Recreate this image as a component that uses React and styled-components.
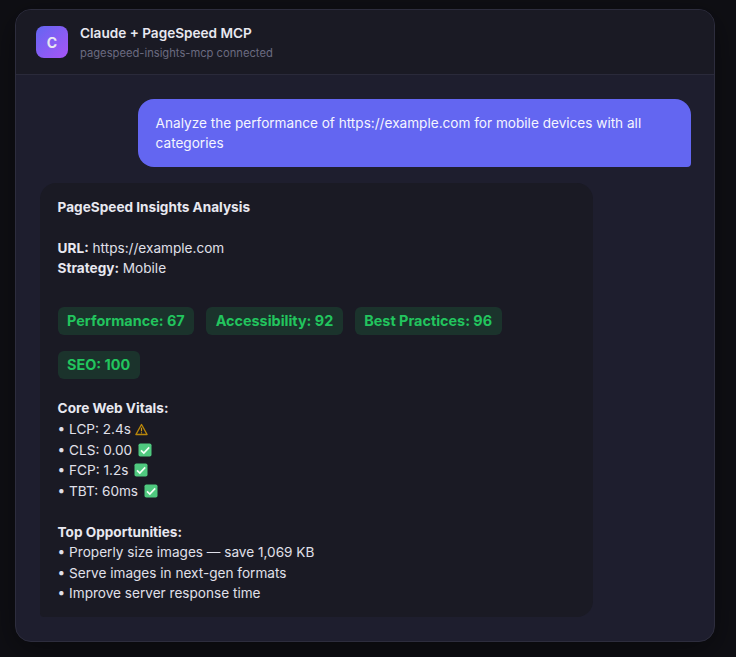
import React from 'react'
import styled, { createGlobalStyle } from 'styled-components'

const GlobalStyle = createGlobalStyle`
   html, body {
      margin: 0;
      background: #0f0f14;
   }
   * {
      box-sizing: border-box;
   }
`

const scores = [
   'Performance: 67',
   'Accessibility: 92',
   'Best Practices: 96',
   'SEO: 100',
]

const vitals = [
   { label: 'LCP: 2.4s', warn: true },
   { label: 'CLS: 0.00' },
   { label: 'FCP: 1.2s' },
   { label: 'TBT: 60ms' },
]

const opportunities = [
   'Properly size images — save 1,069 KB',
   'Serve images in next-gen formats',
   'Improve server response time',
]

function WarnIcon() {
   return (
      <StatusSvg viewBox="0 0 14 14" $size={13} $gap={0}>
         <path
            d="M7 1.6 13 12.4H1L7 1.6Z"
            fill="none"
            stroke="#b8860b"
            strokeWidth="1.5"
            strokeLinejoin="round"
         />
         <path d="M7 5v4" stroke="#d39a10" strokeWidth="1.3" />
         <path d="M7 10v1.2" stroke="#d39a10" strokeWidth="1.2" />
      </StatusSvg>
   )
}

function CheckIcon() {
   return (
      <StatusSvg viewBox="0 0 14 14" $size={14} $gap={2}>
         <rect x="0.5" y="0.5" width="13" height="13" rx="1.8" fill="#4fc97f" />
         <path
            d="M3 7.4 5.8 10 11.2 4.4"
            fill="none"
            stroke="#f2fff6"
            strokeWidth="1.7"
         />
      </StatusSvg>
   )
}

function App() {
   return (
      <Page>
         <GlobalStyle />
         <Card>
            <Header>
               <Avatar>C</Avatar>
               <div>
                  <Title>Claude + PageSpeed MCP</Title>
                  <Subtitle>pagespeed-insights-mcp connected</Subtitle>
               </div>
            </Header>
            <Messages>
               <UserBubble>
                  Analyze the performance of https://example.com for mobile
                  devices with all categories
               </UserBubble>
               <AssistantBubble>
                  <Line>
                     <b>PageSpeed Insights Analysis</b>
                  </Line>
                  <Spacer />
                  <Line>
                     <b>URL:</b> https://example.com
                  </Line>
                  <Line>
                     <b>Strategy:</b> Mobile
                  </Line>
                  <Badges>
                     {scores.map((score) => (
                        <Badge key={score}>{score}</Badge>
                     ))}
                  </Badges>
                  <Line $tall>
                     <b>Core Web Vitals:</b>
                  </Line>
                  {vitals.map((vital) => (
                     <Line key={vital.label} $tall>
                        • {vital.label} {vital.warn ? <WarnIcon /> : <CheckIcon />}
                     </Line>
                  ))}
                  <Spacer $short />
                  <Line>
                     <b>Top Opportunities:</b>
                  </Line>
                  {opportunities.map((item) => (
                     <Line key={item}>• {item}</Line>
                  ))}
               </AssistantBubble>
            </Messages>
         </Card>
      </Page>
   )
}

export default App

const Page = styled.div`
   min-height: 657px;
   padding: 9px 21px 16px 15px;
   font-family: 'Inter', sans-serif;
`

const Card = styled.div`
   width: 700px;
   background: #1e1e2e;
   border: 1px solid #2d2d3d;
   border-radius: 16px;
   overflow: hidden;
   box-shadow: 0 8px 32px rgba(0, 0, 0, 0.4);
`

const Header = styled.div`
   display: flex;
   align-items: center;
   gap: 12px;
   height: 65px;
   padding: 0 20px;
   background: #1a1a24;
   border-bottom: 1px solid #2a2a3a;
`

const Avatar = styled.div`
   display: flex;
   align-items: center;
   justify-content: center;
   width: 32px;
   height: 32px;
   border-radius: 8px;
   background: linear-gradient(135deg, #6366f1, #a855f7);
   color: #e8e8f0;
   font-size: 14px;
   font-weight: 700;
`

const Title = styled.div`
   color: #e8e8f0;
   font-size: 13.6px;
   font-weight: 600;
   line-height: 20px;
`

const Subtitle = styled.div`
   margin-top: 1px;
   color: #6b6b80;
   font-size: 11.2px;
   line-height: 18px;
`

const Messages = styled.div`
   display: flex;
   flex-direction: column;
   gap: 16px;
   padding: 24px;
`

const UserBubble = styled.div`
   align-self: flex-end;
   width: 553px;
   margin-right: -1px;
   padding: 13.6px 17.6px;
   background: #6366f1;
   border-radius: 16px 16px 4px 16px;
   color: #f5f5ff;
   font-size: 13.6px;
   line-height: 20.4px;
`

const AssistantBubble = styled.div`
   width: 553px;
   padding: 13.6px 17.6px;
   background: #1a1a24;
   border-radius: 16px 16px 16px 4px;
   color: #e0e0ea;
   font-size: 13.6px;
   line-height: 20.4px;

   b {
      font-weight: 700;
      color: #e8e8f0;
   }
`

const Line = styled.div`
   height: ${(props) => (props.$tall ? '20.8px' : '20.4px')};
`

const Spacer = styled.div`
   height: ${(props) => (props.$short ? '20px' : '20.8px')};
`

const Badges = styled.div`
   display: flex;
   flex-wrap: wrap;
   gap: 16px 12px;
   margin: 28.4px 0 19px;
`

const Badge = styled.span`
   padding: 4px 9.5px;
   height: 28px;
   border-radius: 6px;
   background: rgba(34, 197, 94, 0.15);
   color: #22c55e;
   font-size: 14.4px;
   font-weight: 650;
   line-height: 20px;
`

const StatusSvg = styled.svg`
   display: inline-block;
   width: ${(props) => props.$size}px;
   height: ${(props) => props.$size}px;
   margin-left: ${(props) => props.$gap}px;
   vertical-align: -2px;
`
